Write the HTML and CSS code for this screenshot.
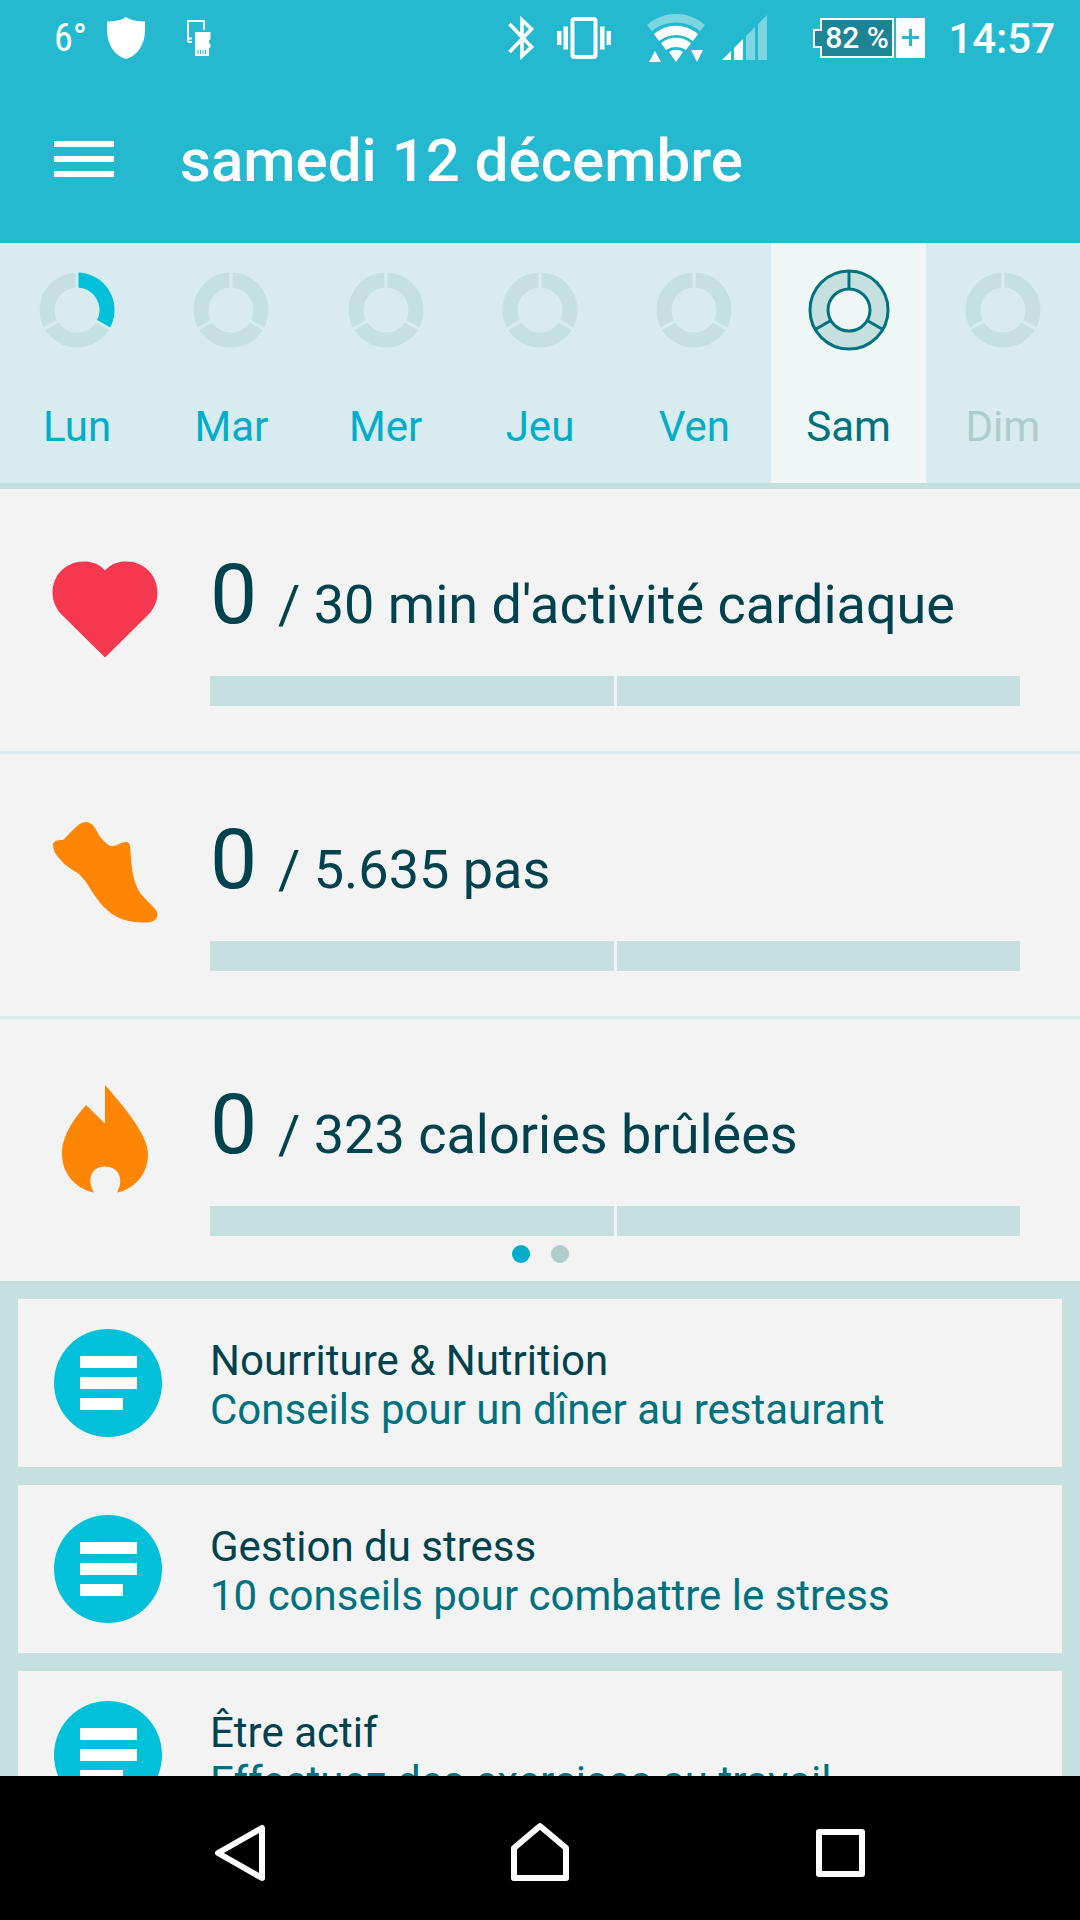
FILE: index.html
```html
<!DOCTYPE html>
<html lang="fr">
<head>
<meta charset="utf-8">
<meta name="viewport" content="width=device-width, initial-scale=1">
<title>samedi 12 décembre</title>
<link rel="stylesheet" href="styles.css">
</head>
<body>
<svg class="defs" width="0" height="0" aria-hidden="true">
  <defs>
    <symbol id="ring" viewBox="0 0 82 82">
      <circle cx="41" cy="41" r="30" fill="none" stroke="#c6e0e0" stroke-width="15"/>
      <path d="M41 20V2M59.200 51.500L74.800 60.500M22.800 51.500L7.200 60.500" stroke="#d8ebee" stroke-width="3"/>
    </symbol>
    <symbol id="ring-third" viewBox="0 0 82 82">
      <circle cx="41" cy="41" r="30" fill="none" stroke="#c6e0e0" stroke-width="15"/>
      <path d="M41 11A30 30 0 0 1 66.980 56" fill="none" stroke="#00c1d9" stroke-width="15"/>
      <path d="M41 20V2M59.200 51.500L74.800 60.500M22.800 51.500L7.200 60.500" stroke="#d8ebee" stroke-width="3"/>
    </symbol>
    <symbol id="ring-selected" viewBox="0 0 82 82">
      <circle cx="41" cy="41" r="30" fill="none" stroke="#c6e0e0" stroke-width="16"/>
      <g fill="none" stroke="#00727f" stroke-width="3">
        <circle cx="41" cy="41" r="39"/>
        <circle cx="41" cy="41" r="21"/>
        <path d="M41 20V2M59.200 51.500L74.800 60.500M22.800 51.500L7.200 60.500"/>
      </g>
    </symbol>
    <symbol id="article" viewBox="0 0 108 108">
      <circle cx="54" cy="54" r="54" fill="#00c1d9"/>
      <path d="M26 27h57v12H26zM26 48h57v12H26zM26 69h43v12H26z" fill="#fff"/>
    </symbol>
  </defs>
</svg>

<div class="app">
  <header class="header">
    <div class="status">
      <div class="status-left">
        <span class="temp">6°</span>
        <svg class="shield" width="38" height="42" viewBox="0 0 38 42"><path d="M19 0C14 3.500 7 4.300 0 4.500V13C0 28 8 39 19 42C30 39 38 28 38 13V4.500C31 4.300 24 3.500 19 0Z" fill="#fff"/></svg>
        <svg width="24" height="36" viewBox="0 0 24 36">
          <path d="M1 22V1H17V10M1 22H5M2 18.500H5" fill="none" stroke="#fff" stroke-width="2"/>
          <path d="M8 12H23.500V19L22 20.500V23L23.500 24.500V27L22 28.500V36H8Z" fill="#fff"/>
          <path d="M11 30V34M13.500 30V34M16 30V34M18.500 30V34" stroke="#25b9d0" stroke-width="1"/>
        </svg>
      </div>
      <div class="status-right">
        <svg width="27" height="44" viewBox="0 0 27 44"><path d="M1.500 8L23.500 31L14 40V4L23.500 13L1.500 36" fill="none" stroke="#fff" stroke-width="3.600"/></svg>
        <svg class="vibrate" width="54" height="42" viewBox="0 0 54 42"><rect x="15.500" y="2" width="23" height="38" rx="2" fill="none" stroke="#fff" stroke-width="4"/><path d="M0 14h4.500v14H0zM6.500 9.500h4.500v23H6.500zM43 9.500h4.500v23H43zM49.500 14H54v14h-4.500z" fill="#fff"/></svg>
        <svg class="wifi" width="58" height="48" viewBox="0 0 58 48">
          <path d="M0 11C17 -3.700 41 -3.700 58 11L53 17C39 5.500 19 5.500 5 17Z" fill="#7dd5e2"/>
          <path d="M7 20C20 9 38 9 51 20L46 27C36 19 22 19 12 27ZM14 29C23 22 35 22 44 29L39 36C33 32 25 32 19 36ZM22 38C26 35 32 35 36 38L29 48ZM8 37L14 48H2ZM44 36H56L50 48Z" fill="#fff"/>
        </svg>
        <svg class="signal" width="46" height="46" viewBox="0 0 46 46"><path d="M0 45L9 36V45ZM12 33L21 24V45H12Z" fill="#fff"/><path d="M24 21L33 12V45H24ZM36 9L45 0V45H36Z" fill="#7dd5e2"/></svg>
        <svg class="battery" width="112" height="40" viewBox="0 0 112 40">
          <path d="M8 1H80V39H8V29H1V12H8Z" fill="#1c8494" stroke="#fff" stroke-width="2"/>
          <rect x="83" y="0" width="29" height="40" rx="1" fill="#fff"/>
          <path d="M89 19.500H106M97.500 11V28" stroke="#25b9d0" stroke-width="3"/>
          <text class="battery-text" x="44" y="30" text-anchor="middle">82 %</text>
        </svg>
        <time class="clock">14:57</time>
      </div>
    </div>
    <div class="toolbar">
      <button class="menu" aria-label="Menu"><span></span><span></span><span></span></button>
      <h1 class="title">samedi 12 décembre</h1>
    </div>
  </header>

  <nav class="week" aria-label="Semaine">
    <button class="day"><svg class="ring"><use href="#ring-third"/></svg>Lun</button>
    <button class="day"><svg class="ring"><use href="#ring"/></svg>Mar</button>
    <button class="day"><svg class="ring"><use href="#ring"/></svg>Mer</button>
    <button class="day"><svg class="ring"><use href="#ring"/></svg>Jeu</button>
    <button class="day"><svg class="ring"><use href="#ring"/></svg>Ven</button>
    <button class="day day-selected" aria-current="date"><svg class="ring"><use href="#ring-selected"/></svg>Sam</button>
    <button class="day day-future" disabled><svg class="ring"><use href="#ring"/></svg>Dim</button>
  </nav>

  <main class="content">
    <section class="goals">
      <article class="goal">
        <svg class="goal-icon" viewBox="0 0 108 108"><path d="M54 15.500C60 9 67 6.500 75 6.500C93 6.500 106.500 20 106.500 38C106.500 46 103 54 97 60L54 102.500L11 60C5 54 1.500 46 1.500 38C1.500 20 15 6.500 33 6.500C41 6.500 48 9 54 15.500Z" fill="#f5384f"/></svg>
        <div class="goal-body">
          <p class="goal-text"><span class="goal-value">0 </span>/ 30 min d'activité cardiaque</p>
          <div class="bar"><span></span><span></span></div>
        </div>
      </article>
      <article class="goal">
        <svg class="goal-icon" viewBox="0 0 108 108"><path d="M28 4.500C33 .5 39 1 43 6.500C46 11 49 18 54 22C58 26.500 61 27 66 25C70 23.500 73 21 77 22.500C80 24 79 29 80 38C81 52 83 64 90 74C94 79 99 83 104 89C110 96 104 102 97 102.500C78 103 66 99 56 90C43 78 38 64 29 55C24 50 18 50 9 39C4 34 2 29 2 25C2 21 6 20 12 20C14 19 20 11 28 4.500Z" fill="#ff8505"/></svg>
        <div class="goal-body">
          <p class="goal-text"><span class="goal-value">0 </span>/ 5.635 pas</p>
          <div class="bar"><span></span><span></span></div>
        </div>
      </article>
      <article class="goal">
        <svg class="goal-icon" viewBox="0 0 108 108"><path d="M54 0C74 23 97 50 97 69C97 89 84 104 66 107.500C73 96 69 81.500 54 81.500C39 81.500 36 96 43 107.500C25 104 11 89 11 69C11 50 23 34 35 20L54 38.500Z" fill="#ff8505"/></svg>
        <div class="goal-body">
          <p class="goal-text"><span class="goal-value">0 </span>/ 323 calories brûlées</p>
          <div class="bar"><span></span><span></span></div>
        </div>
      </article>
      <div class="pager">
        <button class="dot dot-active" aria-label="Page 1"></button>
        <button class="dot" aria-label="Page 2"></button>
      </div>
    </section>

    <section class="cards">
      <a class="card" href="#nutrition">
        <svg class="card-icon"><use href="#article"/></svg>
        <span class="card-body"><span class="card-title">Nourriture &amp; Nutrition</span><span class="card-sub">Conseils pour un dîner au restaurant</span></span>
      </a>
      <a class="card" href="#stress">
        <svg class="card-icon"><use href="#article"/></svg>
        <span class="card-body"><span class="card-title">Gestion du stress</span><span class="card-sub">10 conseils pour combattre le stress</span></span>
      </a>
      <a class="card" href="#actif">
        <svg class="card-icon"><use href="#article"/></svg>
        <span class="card-body"><span class="card-title">Être actif</span><span class="card-sub">Effectuez des exercises au travail</span></span>
      </a>
    </section>
  </main>

  <nav class="system" aria-label="Système">
    <button aria-label="Retour"><svg width="60" height="60" viewBox="0 0 60 60"><path d="M8 31L52 6V56Z"/></svg></button>
    <button aria-label="Accueil"><svg width="60" height="60" viewBox="0 0 60 60"><path d="M4 26V56H56V26L30 4Z"/></svg></button>
    <button aria-label="Applications récentes"><svg width="60" height="60" viewBox="0 0 60 60"><rect x="9" y="10" width="43" height="42"/></svg></button>
  </nav>
</div>
</body>
</html>
```

FILE: styles.css
```css
* {
  box-sizing: border-box;
}

body {
  margin: 0;
  font-family: Roboto, "Liberation Sans", sans-serif;
  color: #00434e;
  background: #f3f3f3;
}

button {
  margin: 0;
  padding: 0;
  border: 0;
  background: none;
  font: inherit;
  color: inherit;
}

svg {
  display: block;
  flex: none;
}

.defs {
  position: absolute;
}

.app {
  display: flex;
  flex-direction: column;
  height: 100vh;
  overflow: hidden;
}

/* Header */

.header {
  flex: none;
  background: #25b9d0;
  color: #fff;
}

.status {
  display: flex;
  justify-content: space-between;
  height: 75px;
  padding: 0 25px 0 54px;
}

.status-left,
.status-right {
  display: flex;
  align-items: center;
}

.temp {
  width: 24px;
  font-family: "Roboto Condensed", Roboto, sans-serif;
  font-size: 38px;
  line-height: 42px;
  white-space: nowrap;
}

.shield {
  margin: 0 42px 0 29px;
}

.vibrate {
  margin: 0 36px 0 22px;
}

.signal {
  margin: 0 45px 0 17px;
}

.battery {
  margin-right: 23px;
}

.battery-text {
  font-size: 30px;
  font-weight: 500;
  fill: #fff;
}

.clock {
  padding-top: 3px;
  font-size: 42px;
  font-weight: 500;
  line-height: 48px;
}

.toolbar {
  display: flex;
  align-items: center;
  height: 168px;
  padding: 0 54px;
  gap: 66px;
}

.menu {
  display: flex;
  flex-direction: column;
  gap: 9px;
  width: 60px;
}

.menu span {
  height: 6px;
  background: #fff;
}

.title {
  margin: 0;
  padding-top: 4px;
  font-size: 60px;
  font-weight: 500;
  line-height: 72px;
}

/* Week strip */

.week {
  flex: none;
  display: grid;
  grid-template-columns: repeat(7, 1fr);
  background: #d8ebee;
  border-bottom: 6px solid #c6e0e0;
}

.day {
  display: flex;
  flex-direction: column;
  align-items: center;
  gap: 52px;
  height: 240px;
  padding-top: 26px;
  font-size: 42px;
  line-height: 48px;
  color: #00aecb;
}

.day-selected {
  background: #eef6f6;
  color: #00727f;
}

.day-future {
  color: #aecccc;
}

.ring {
  width: 82px;
  height: 82px;
}

/* Goals */

.content {
  flex: 1;
  min-height: 0;
  overflow: hidden;
}

.goals {
  position: relative;
}

.goal {
  display: flex;
  gap: 51px;
  height: 265px;
  padding: 66px 60px 0 51px;
  border-bottom: 3px solid #d8ebed;
}

.goal:nth-child(3) {
  height: 262px;
  border-bottom: 0;
}

.goal-icon {
  width: 108px;
  height: 108px;
}

.goal-body {
  flex: 1;
}

.goal-text {
  margin: -15px 0 17px;
  font-size: 54px;
  line-height: 109px;
}

.goal-value {
  font-size: 84px;
}

.bar {
  display: flex;
  gap: 3px;
}

.bar span {
  flex: 1;
  height: 30px;
  background: #c6e0e0;
}

.pager {
  position: absolute;
  right: 0;
  bottom: 18px;
  left: 0;
  display: flex;
  justify-content: center;
  gap: 21px;
}

.dot {
  width: 18px;
  height: 18px;
  border-radius: 50%;
  background: #aecccc;
}

.dot-active {
  background: #00aecb;
}

/* Article cards */

.cards {
  display: flex;
  flex-direction: column;
  gap: 18px;
  padding: 18px;
  background: #c6e0e0;
}

.card {
  display: flex;
  gap: 48px;
  height: 168px;
  padding: 30px 36px;
  background: #f3f3f3;
  text-decoration: none;
}

.card-icon {
  width: 108px;
  height: 108px;
}

.card-body {
  display: flex;
  flex-direction: column;
  padding-top: 7px;
  font-size: 42px;
  line-height: 49px;
}

.card-title {
  color: #00434e;
}

.card-sub {
  color: #00727f;
}

/* System navigation */

.system {
  flex: none;
  display: grid;
  grid-template-columns: repeat(3, 300px);
  justify-content: center;
  height: 144px;
  padding-top: 8px;
  background: #000;
}

.system button {
  display: flex;
  align-items: center;
  justify-content: center;
}

.system svg {
  fill: none;
  stroke: #fff;
  stroke-width: 6;
  stroke-linejoin: round;
}
```
